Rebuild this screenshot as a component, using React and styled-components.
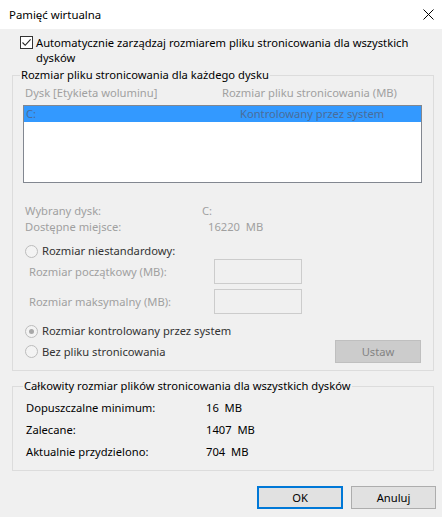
import React from 'react'
import styled, { createGlobalStyle } from 'styled-components'

const Global = createGlobalStyle`
  html, body {
    margin: 0;
    padding: 0;
    background: #f0f0f0;
  }
  * {
    box-sizing: border-box;
  }
`

const Window = styled.div`
  width: 442px;
  height: 517px;
  background: #f0f0f0;
  font-family: "Noto Sans", "Open Sans", sans-serif;
  font-size: 11.2px;
  color: #000;
  display: flex;
  flex-direction: column;
  overflow: hidden;

  & > * {
    flex: none;
  }
`

const TitleBar = styled.div`
  height: 29px;
  background: #fff;
  display: flex;
  align-items: center;
  justify-content: space-between;
  padding: 0 8px 0 9px;
`

const Title = styled.span`
  line-height: 16px;
  font-size: 11.4px;
`

const Body = styled.div`
  display: flex;
  flex-direction: column;
  padding: 6px 8px 0 12px;
`

const CheckRow = styled.label`
  display: flex;
  align-items: flex-start;
  gap: 3px;
  padding-left: 8px;
  line-height: 15px;
  white-space: nowrap;
`

const CheckBox = styled.span`
  width: 13px;
  height: 13px;
  margin-top: 1px;
  border: 1px solid #333;
  background: #fff;
  flex: none;
  display: flex;
  align-items: center;
  justify-content: center;
`

const Group = styled.fieldset`
  margin: ${p => p.$top || 0}px 0 0 0;
  width: 422px;
  min-width: 0;
  border: 1px solid #dcdcdc;
  padding: ${p => p.$pad || '2px 11px 7px 10px'};
  display: flex;
  flex-direction: column;
`

const Legend = styled.legend`
  padding: 0 1px;
  margin-left: -3px;
  line-height: 16px;
`

const Muted = styled.span`
  color: ${p => (p.$dark ? '#000' : '#a0a0a0')};
  line-height: 16px;
  padding-left: ${p => p.$indent || 0}px;
  white-space: pre;
`

const HeaderRow = styled.div`
  display: grid;
  grid-template-columns: 197px 1fr;
  padding-left: 2px;
`

const ListBox = styled.div`
  margin-top: 4px;
  height: 78px;
  border: 1px solid #828790;
  background: #fff;
`

const ListRow = styled.div`
  display: grid;
  grid-template-columns: 214px 1fr;
  height: 16px;
  line-height: 16px;
  padding-left: 2px;
  background: ${p => (p.$selected ? '#3399ff' : 'transparent')};
  color: #4a6d9a;
`

const InfoGrid = styled.div`
  display: grid;
  grid-template-columns: ${p => p.$col}px 1fr;
  grid-auto-rows: ${p => p.$lh || 16}px;
  align-items: center;
  margin-top: ${p => p.$top || 0}px;
  padding-left: ${p => p.$indent || 0}px;
  line-height: 16px;
  color: ${p => (p.$muted ? '#a0a0a0' : '#000')};
`

const RadioRow = styled.div`
  display: flex;
  align-items: center;
  gap: 4px;
  padding-left: 2px;
  line-height: 16px;
  height: ${p => p.$h || 16}px;
  margin-top: ${p => p.$top || 0}px;
  color: #333;
`

const Radio = styled.span`
  width: 13px;
  height: 13px;
  border-radius: 50%;
  border: 1px solid #bcbcbc;
  background: #f3f3f3;
  display: flex;
  align-items: center;
  justify-content: center;
  flex: none;

  &::after {
    content: '';
    width: 5px;
    height: 5px;
    border-radius: 50%;
    background: ${p => (p.$checked ? '#a8a8a8' : 'transparent')};
  }
`

const FieldRow = styled.div`
  display: grid;
  grid-template-columns: 185px 88px;
  align-items: center;
  padding-left: 6px;
  margin-top: ${p => p.$top || 0}px;
  color: #a0a0a0;
  line-height: 16px;
`

const Input = styled.div`
  height: 25px;
  border: 1px solid #cccccc;
  background: #f0f0f0;
`

const LastRow = styled.div`
  display: flex;
  justify-content: space-between;
  align-items: center;
  margin-top: 1px;
  padding-right: 1px;
`

const Button = styled.button`
  width: ${p => p.$w || 86}px;
  height: ${p => p.$h || 23}px;
  font: inherit;
  padding: 0;
  background: ${p => (p.$disabled ? '#cccccc' : '#e1e1e1')};
  color: ${p => (p.$disabled ? '#838383' : '#000')};
  border: ${p =>
    p.$primary ? '2px solid #0078d7' : p.$disabled ? '1px solid #bfbfbf' : '1px solid #adadad'};
`

const Footer = styled.div`
  display: flex;
  justify-content: flex-end;
  gap: 8px;
  margin-top: 15px;
  padding-right: 6px;
`

export default function App() {
  return (
    <>
      <Global />
      <Window>
        <TitleBar>
          <Title>Pamięć wirtualna</Title>
          <svg width="11" height="11" viewBox="0 0 11 11">
            <path d="M0.5 0.5 L10.5 10.5 M10.5 0.5 L0.5 10.5" stroke="#000" strokeWidth="1" fill="none" />
          </svg>
        </TitleBar>
        <Body>
          <CheckRow>
            <CheckBox>
              <svg width="11" height="11" viewBox="0 0 11 11">
                <path d="M1.5 5.5 L4.2 8.3 L9.6 2.4" stroke="#222" strokeWidth="1.1" fill="none" />
              </svg>
            </CheckBox>
            <span>
              Automatycznie zarządzaj rozmiarem pliku stronicowania dla wszystkich
              <br />
              dysków
            </span>
          </CheckRow>

          <Group $top={2}>
            <Legend>Rozmiar pliku stronicowania dla każdego dysku</Legend>
            <HeaderRow>
              <Muted>Dysk [Etykieta woluminu]</Muted>
              <Muted>Rozmiar pliku stronicowania (MB)</Muted>
            </HeaderRow>
            <ListBox>
              <ListRow $selected>
                <span>C:</span>
                <span>Kontrolowany przez system</span>
              </ListRow>
            </ListBox>

            <InfoGrid $col={177} $top={20} $indent={2} $muted>
              <span>Wybrany dysk:</span>
              <span>C:</span>
              <span>Dostępne miejsce:</span>
              <Muted $indent={6}>16220  MB</Muted>
            </InfoGrid>

            <RadioRow $top={8}>
              <Radio />
              <span>Rozmiar niestandardowy:</span>
            </RadioRow>
            <FieldRow>
              <span>Rozmiar początkowy (MB):</span>
              <Input />
            </FieldRow>
            <FieldRow $top={5}>
              <span>Rozmiar maksymalny (MB):</span>
              <Input />
            </FieldRow>
            <RadioRow $top={9}>
              <Radio $checked />
              <span>Rozmiar kontrolowany przez system</span>
            </RadioRow>
            <LastRow>
              <RadioRow $h={23}>
                <Radio />
                <span>Bez pliku stronicowania</span>
              </RadioRow>
              <Button $disabled>Ustaw</Button>
            </LastRow>
          </Group>

          <Group $top={7} $pad="3px 11px 7px 13px">
            <Legend>Całkowity rozmiar plików stronicowania dla wszystkich dysków</Legend>
            <InfoGrid $col={180} $lh={22}>
              <span>Dopuszczalne minimum:</span>
              <Muted $dark>16  MB</Muted>
              <span>Zalecane:</span>
              <Muted $dark>1407  MB</Muted>
              <span>Aktualnie przydzielono:</span>
              <Muted $dark>704  MB</Muted>
            </InfoGrid>
          </Group>
        </Body>
        <Footer>
          <Button $primary>OK</Button>
          <Button $w={85}>Anuluj</Button>
        </Footer>
      </Window>
    </>
  )
}
